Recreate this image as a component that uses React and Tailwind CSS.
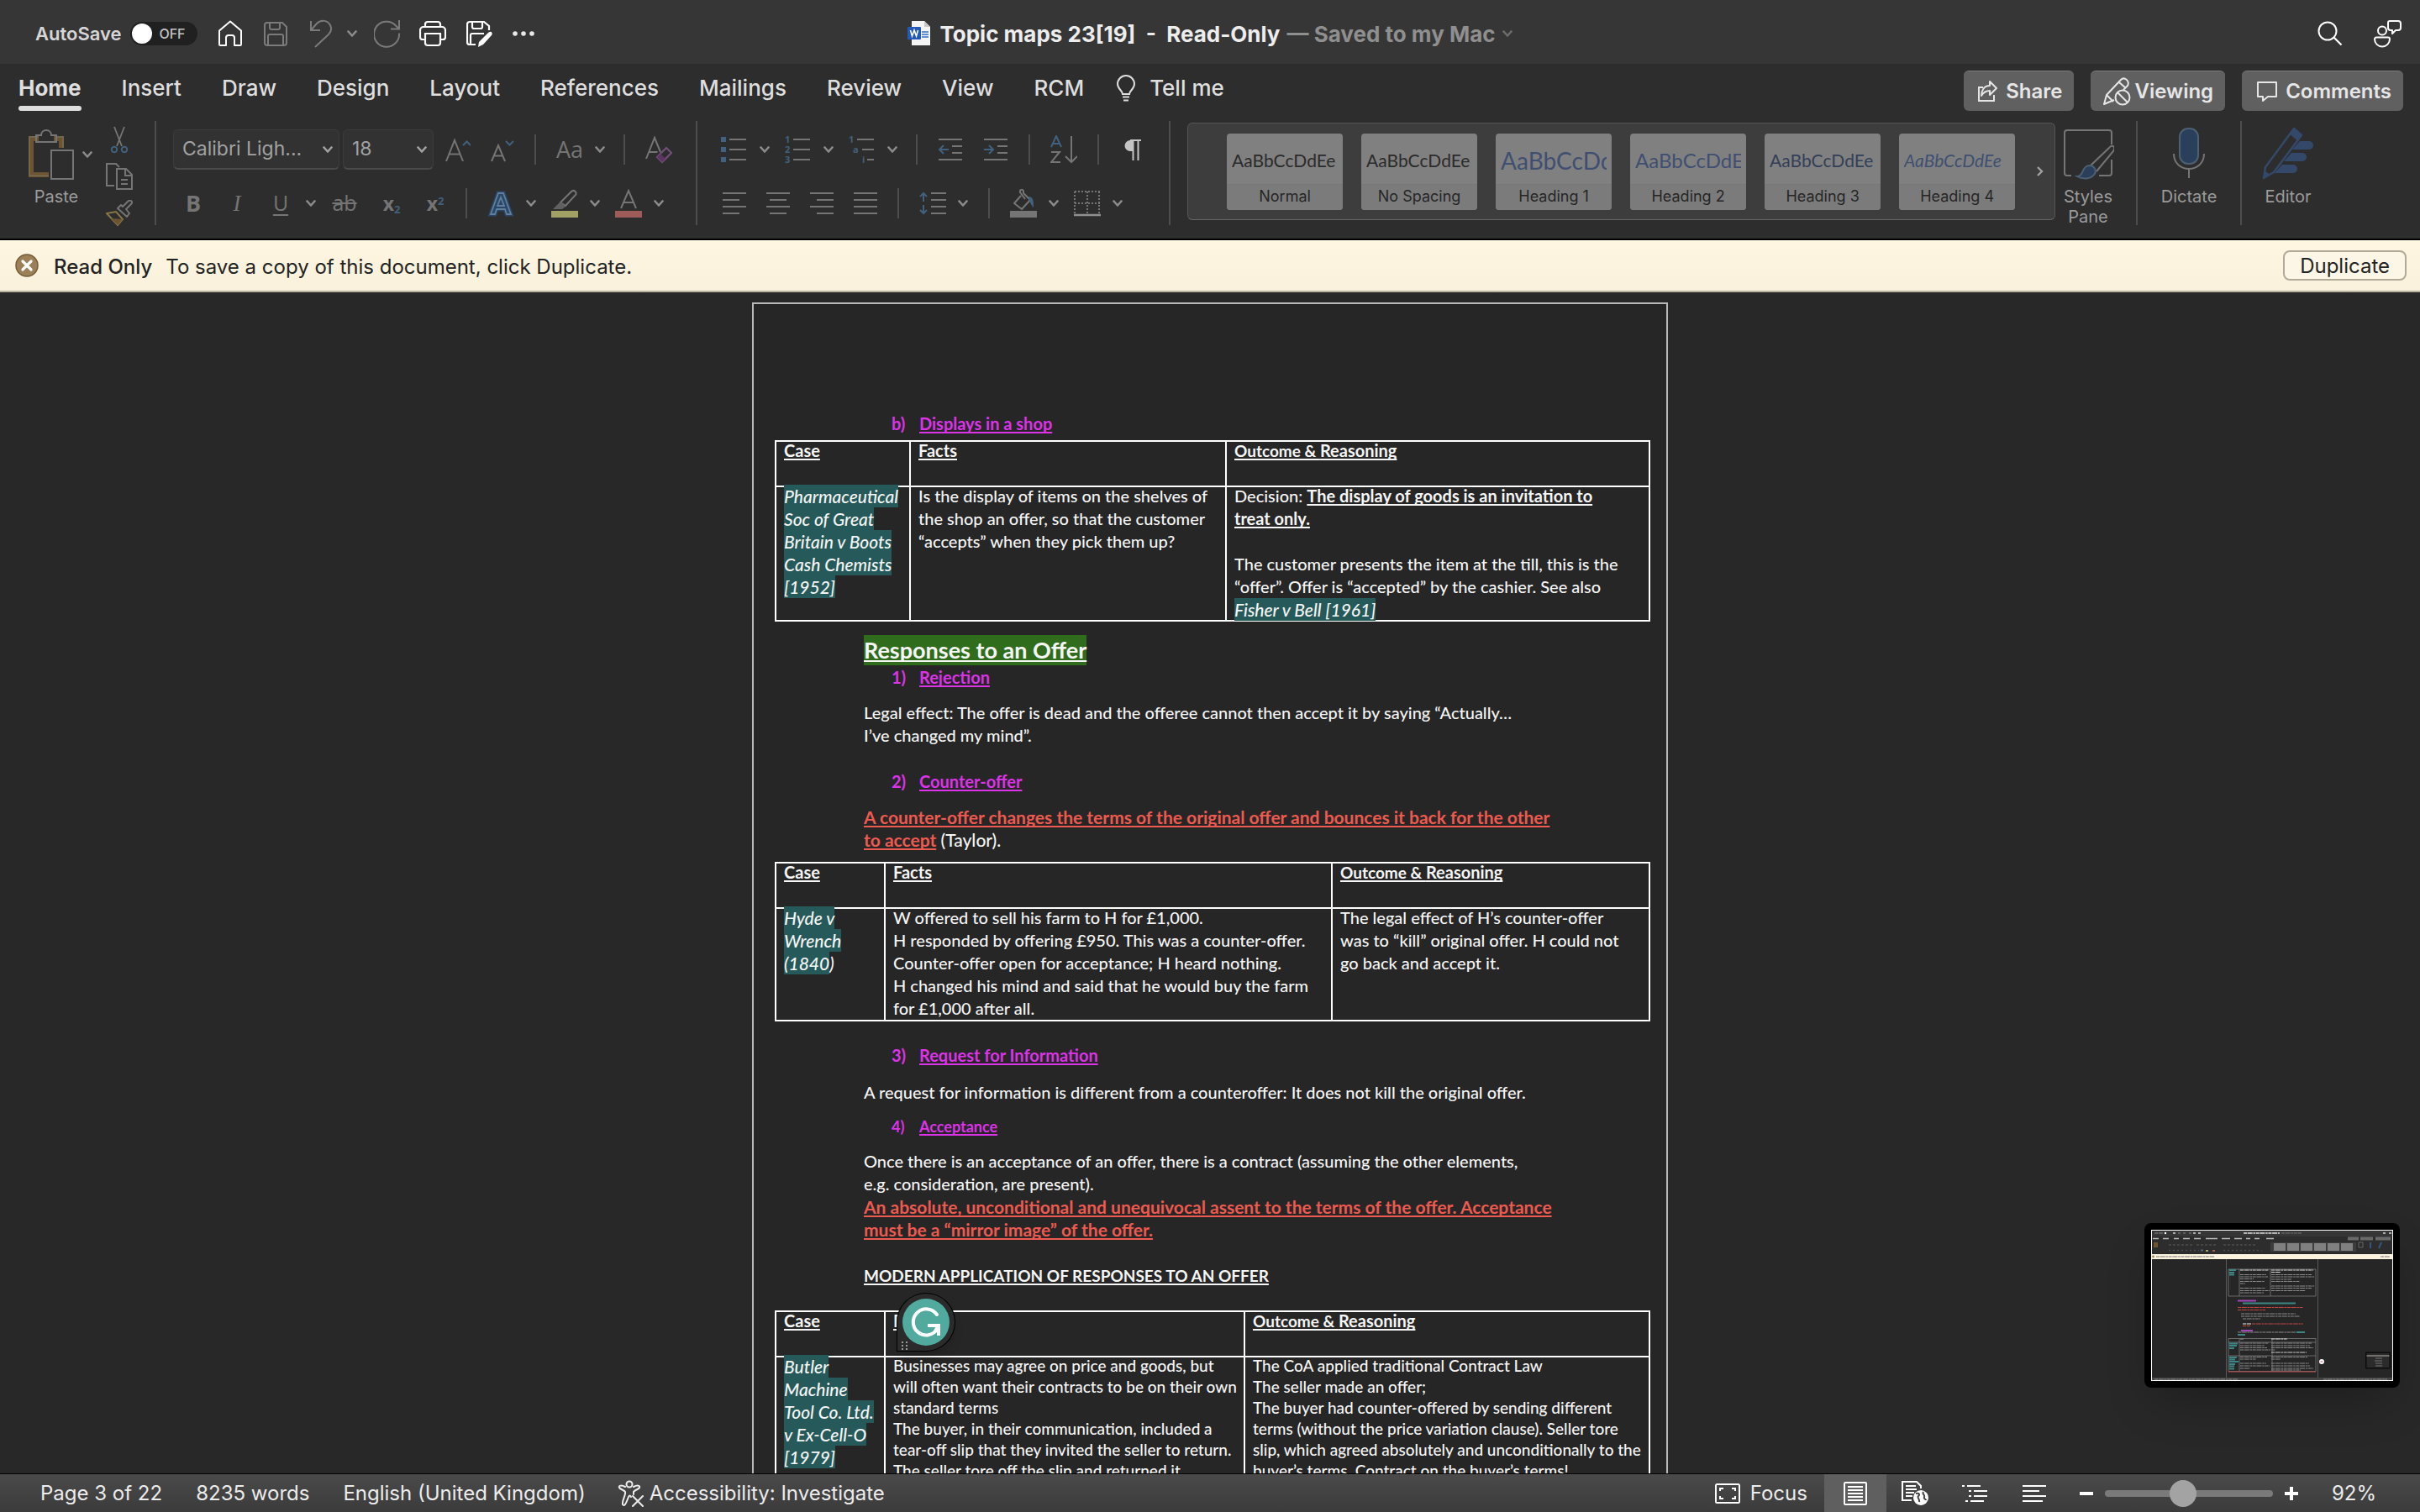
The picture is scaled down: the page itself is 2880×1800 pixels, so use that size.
import React from "react";

const G = "#757575";
const B = "#41617e";

function Svg({ w, h, children, ...rest }) {
  return (
    <svg width={w} height={h} viewBox={`0 0 ${w} ${h}`} fill="none" className="block shrink-0" aria-hidden="true" {...rest}>
      {children}
    </svg>
  );
}

function Chevron({ color = "#8c8c8c" }) {
  return (
    <Svg w={12} h={10}>
      <path d="M1.500 2.500 6 7.500 10.500 2.500" stroke={color} strokeWidth="2.600" strokeLinecap="round" strokeLinejoin="round" />
    </Svg>
  );
}

function IconButton({ label, className = "", children }) {
  return (
    <button type="button" aria-label={label} className={`flex shrink-0 items-center justify-center ${className}`}>
      {children}
    </button>
  );
}

function Menu({ label, className = "" }) {
  return (
    <IconButton label={label} className={className}>
      <Chevron />
    </IconButton>
  );
}

function Sep({ className = "" }) {
  return <div className={`h-9 w-0.5 shrink-0 bg-[#4d4d4d] ${className}`} />;
}

function GroupSep({ className = "" }) {
  return <div className={`h-[124px] w-0.5 shrink-0 bg-[#4d4d4d] ${className}`} />;
}

/* ---------- title bar ---------- */

function TitleBar() {
  return (
    <header className="grid h-[76px] shrink-0 grid-cols-[1fr_auto_1fr] items-center bg-[#363636] pt-1">
      <div className="flex items-center pl-[42px]">
        <label htmlFor="autosave" className="text-[22px] font-semibold text-[#d6d6d6]">AutoSave</label>
        <span className="relative ml-2.5 flex h-7 w-20 items-center justify-between rounded-full bg-[#202020] pl-0.5 pr-3.5">
          <input id="autosave" type="checkbox" role="switch" className="absolute inset-0 h-full w-full cursor-pointer opacity-0" />
          <span className="h-6 w-6 rounded-full bg-white" />
          <span className="text-[16px] font-medium text-[#c4c4c4]">OFF</span>
        </span>
        <IconButton label="Home" className="ml-6">
          <Svg w={30} h={32}>
            <path d="M2 12.500 15 1.500 28 12.500V29a1 1 0 0 1-1 1H20V21a3 3 0 0 0-3-3h-4a3 3 0 0 0-3 3v9H3a1 1 0 0 1-1-1Z" stroke="#fff" strokeWidth="2" strokeLinejoin="round" />
          </Svg>
        </IconButton>
        <IconButton label="Save" className="ml-6">
          <Svg w={30} h={32}>
            <g stroke="#7b7b7b" strokeWidth="2">
              <path d="M5 3h18l5 5v19a3 3 0 0 1-3 3H5a3 3 0 0 1-3-3V6a3 3 0 0 1 3-3Z" />
              <path d="M8 3v6a2 2 0 0 0 2 2h8a2 2 0 0 0 2-2V3M6 30V19a2 2 0 0 1 2-2h14a2 2 0 0 1 2 2v11" />
            </g>
          </Svg>
        </IconButton>
        <IconButton label="Undo" className="ml-6">
          <Svg w={30} h={34}>
            <path d="M3 2v11h11M3 13 10 5c5-5 13-4 16 2 2 4 1 8-2 11L8 33" stroke="#7b7b7b" strokeWidth="2" />
          </Svg>
        </IconButton>
        <Menu label="Undo history" className="ml-4" />
        <IconButton label="Redo" className="ml-5">
          <Svg w={32} h={34}>
            <path d="M30 16.500A15 15 0 1 1 26 7.500L29 10.500M30 1v10.500H20" stroke="#7b7b7b" strokeWidth="2" />
          </Svg>
        </IconButton>
        <IconButton label="Print" className="ml-[22px]">
          <Svg w={32} h={32}>
            <g stroke="#fff" strokeWidth="2.200">
              <path d="M7 8V5a3 3 0 0 1 3-3h12a3 3 0 0 1 3 3v3M7 23H4a3 3 0 0 1-3-3v-8a4 4 0 0 1 4-4h22a4 4 0 0 1 4 4v8a3 3 0 0 1-3 3h-3" />
              <path d="M7 16h18v11a3 3 0 0 1-3 3H10a3 3 0 0 1-3-3Z" />
            </g>
          </Svg>
        </IconButton>
        <IconButton label="Save as" className="ml-6">
          <Svg w={32} h={34}>
            <path d="M11 30H4a3 3 0 0 1-3-3V6a3 3 0 0 1 3-3h17l6 5v5M7 3v6a2 2 0 0 0 2 2h8a2 2 0 0 0 2-2V3M5 30V19a2 2 0 0 1 2-2h14" stroke="#fff" strokeWidth="2.200" />
            <path d="M26 16c3-3 6 0 4 3L20 30l-6 3 1-6Z" fill="#fff" />
          </Svg>
        </IconButton>
        <IconButton label="More commands" className="ml-[22px]">
          <Svg w={28} h={8}>
            <circle cx="4" cy="4" r="2.800" fill="#e8e8e8" />
            <circle cx="14" cy="4" r="2.800" fill="#e8e8e8" />
            <circle cx="24" cy="4" r="2.800" fill="#e8e8e8" />
          </Svg>
        </IconButton>
      </div>
      <h1 className="flex items-center whitespace-nowrap text-[26px] font-bold text-[#ededed]">
        <Svg w={28} h={32}>
          <path d="M5 1h15l7 7v22H5Z" fill="#f4f4f4" />
          <path d="M20 1v7h7Z" fill="#c9c9c9" />
          <path d="M17 14h8M17 17h8M17 20h8" stroke="#2b6fd0" strokeWidth="1.500" />
          <rect x="0" y="8" width="16" height="15" rx="1" fill="#2459b8" />
          <path d="m3.500 12 2 7 2.500-7 2.500 7 2-7" stroke="#fff" strokeWidth="1.600" />
        </Svg>
        <span className="ml-2.5 whitespace-pre">Topic maps 23[19]  -  Read-Only</span>
        <span className="ml-2 text-[#8f8f8f]">— Saved to my Mac</span>
        <span className="ml-2"><Chevron color="#6c6c6c" /></span>
      </h1>
      <div className="flex items-center justify-end gap-9 pr-[22px]">
        <IconButton label="Search">
          <Svg w={30} h={30}>
            <circle cx="12" cy="12" r="10.500" stroke="#fff" strokeWidth="2" />
            <path d="m19.500 19.500 9 9" stroke="#fff" strokeWidth="2.200" />
          </Svg>
        </IconButton>
        <IconButton label="Collaborate">
          <Svg w={34} h={34}>
            <g stroke="#fff" strokeWidth="2">
              <circle cx="11" cy="13.500" r="5" />
              <path d="M4 21.500h14a2 2 0 0 1 2 2c0 5-4 9-9 9s-9-4-9-9a2 2 0 0 1 2-2Z" />
              <path d="M20 2h10a3 3 0 0 1 3 3v5a3 3 0 0 1-3 3h-3l-4 4v-4h-2a3 3 0 0 1-3-3V4a2 2 0 0 1 2-2Z" strokeLinejoin="round" />
            </g>
          </Svg>
        </IconButton>
      </div>
    </header>
  );
}

/* ---------- ribbon tabs ---------- */

const TABS = ["Insert", "Draw", "Design", "Layout", "References", "Mailings", "Review", "View", "RCM"];

function ActionButton({ children }) {
  return (
    <button type="button" className="flex h-12 items-center rounded-md border-t border-[#7c7c7c] bg-[#606060] px-3.5 text-[24px] font-semibold text-[#e6e6e6]">
      {children}
    </button>
  );
}

function TabBar() {
  return (
    <div className="flex h-[68px] items-start pl-[22px] pr-5 pt-2">
      <nav className="flex items-start gap-12 text-[26px] font-medium leading-[42px] text-[#dedede]">
        <button type="button" className="font-bold">
          Home
          <span className="block h-1.5 rounded-full bg-[#dedede]" />
        </button>
        {TABS.map((t) => (
          <button type="button" key={t}>{t}</button>
        ))}
      </nav>
      <button type="button" className="ml-[38px] flex items-center gap-4 text-[26px] font-medium leading-[42px] text-[#dedede]">
        <Svg w={24} h={32}>
          <path d="M8 23c0-4-6-6-6-12a10 10 0 0 1 20 0c0 6-6 8-6 12Z" stroke="#dedede" strokeWidth="2" />
          <path d="M8 26.500h8M9 30.500h6" stroke="#dedede" strokeWidth="2" />
        </Svg>
        Tell me
      </button>
      <div className="ml-auto flex gap-5">
        <ActionButton>
          <Svg w={28} h={28}>
            <path d="M9 9H4v16h18v-7" stroke="#e6e6e6" strokeWidth="2" />
            <path d="M17 2v5C10 7 7 13 7 19c3-5 6-6 10-6v5l8-8Z" stroke="#e6e6e6" strokeWidth="2" strokeLinejoin="round" />
          </Svg>
          <span className="ml-2">Share</span>
        </ActionButton>
        <ActionButton>
          <Svg w={34} h={34}>
            <g stroke="#e6e6e6" strokeWidth="2" strokeLinejoin="round">
              <path d="M14 27 2 32l3-11L22 3c4-4 11 1 8 7l-5 5M5 21l8 8M20 6l8 7" />
              <circle cx="24" cy="24" r="8.500" />
              <path d="m18 18 12 12" />
            </g>
          </Svg>
          <span className="ml-1">Viewing</span>
        </ActionButton>
        <ActionButton>
          <Svg w={32} h={28}>
            <path d="M5 3h22v17H17l-6 5v-5H5Z" stroke="#e6e6e6" strokeWidth="2" strokeLinejoin="round" />
          </Svg>
          <span className="ml-1.5">Comments</span>
        </ActionButton>
      </div>
    </div>
  );
}

/* ---------- ribbon groups ---------- */

function Clipboard() {
  return (
    <div className="flex gap-4 pl-[34px]">
      <div className="flex w-[76px] flex-col pt-2.5">
        <div className="flex items-center justify-between">
          <IconButton label="Paste clipboard">
            <Svg w={54} h={60}>
              <path d="M12 11H3v43h21M30 11h9v11" stroke="#6d5431" strokeWidth="6" />
              <path d="M12 9H1v46h23M32 9h9v13" stroke="#74664a" strokeWidth="2" />
              <path d="M9 15V7h6c0-8 12-8 12 0h6v8Z" stroke="#757575" strokeWidth="2" />
              <path d="M27 25h26v34H27Z" stroke="#757575" strokeWidth="2" />
            </Svg>
          </IconButton>
          <Menu label="Paste options" />
        </div>
        <span className="w-[66px] pt-2 text-center text-[20px] leading-6 text-[#9b9b9b]">Paste</span>
      </div>
      <div className="flex flex-col gap-3 pt-1.5">
        <IconButton label="Cut">
          <Svg w={32} h={32}>
            <path d="M10 1l9 23M22 1l-9 23" stroke={G} strokeWidth="1.800" />
            <circle cx="10" cy="28" r="3.200" stroke={B} strokeWidth="2" />
            <circle cx="22" cy="28" r="3.200" stroke={B} strokeWidth="2" />
          </Svg>
        </IconButton>
        <IconButton label="Copy">
          <Svg w={32} h={32}>
            <path d="M10 27H1V1h11l4 4M13 7h11l7 7v17H13ZM23 7v8h8M18 20h8M18 25h8" stroke={G} strokeWidth="2" />
          </Svg>
        </IconButton>
        <IconButton label="Format painter">
          <Svg w={32} h={32}>
            <path d="m1 16 13 14 6-7-8-9Z" stroke="#8a7748" strokeWidth="2" />
            <path d="M6 22l14 1-6 7Z" fill="#6d5431" />
            <path d="m14 10 11 10 3-4-4-5 6-6c3-3-1-6-4-3l-6 6-2-2Z" stroke={G} strokeWidth="2" strokeLinejoin="round" />
          </Svg>
        </IconButton>
      </div>
    </div>
  );
}

function Picker({ label, value, className }) {
  return (
    <span className={`relative flex h-12 items-center ${className}`}>
      <select aria-label={label} defaultValue={value} className="h-full w-full appearance-none rounded-md border border-b-2 border-[#3c3c3c] border-b-[#4a4a4a] bg-[#323232] pl-2.5 text-[23px] text-[#a2a2a2]">
        <option>{value}</option>
      </select>
      <span className="pointer-events-none absolute right-2"><Chevron color="#a2a2a2" /></span>
    </span>
  );
}

function FontGroup() {
  return (
    <div className="flex flex-col gap-[22px] pt-2.5">
      <div className="flex items-center">
        <Picker label="Font" value="Calibri Ligh..." className="w-[198px]" />
        <Picker label="Font size" value="18" className="ml-1 w-[108px]" />
        <IconButton label="Increase font size" className="ml-3.5">
          <Svg w={30} h={32}>
            <path d="m1 30 10-25 10 25M4.500 21.500h13" stroke={G} strokeWidth="2" />
            <path d="m21 11 4.500-4.500L30 11" stroke={B} strokeWidth="2" />
          </Svg>
        </IconButton>
        <IconButton label="Decrease font size" className="ml-6">
          <Svg w={28} h={32}>
            <path d="m1 30 8-19 8 19M4 23.500h10.500" stroke={G} strokeWidth="2" />
            <path d="m18 6 4.500 4.500L27 6" stroke={B} strokeWidth="2" />
          </Svg>
        </IconButton>
        <Sep className="ml-6" />
        <IconButton label="Change case" className="ml-6 text-[27px] text-[#757575]"><span className="font-['Open_Sans']">Aa</span></IconButton>
        <Menu label="Change case options" className="ml-3.5" />
        <Sep className="ml-[22px]" />
        <IconButton label="Clear formatting" className="ml-6">
          <Svg w={32} h={34}>
            <path d="m1 28 10-25 7 17M4.500 20h10" stroke={G} strokeWidth="2" />
            <path d="m14 26 11-11 6 6-11 11Z" stroke="#75507c" strokeWidth="2" />
            <path d="m14 26 4-4 6 6-4 4Z" fill="#5d3565" />
          </Svg>
        </IconButton>
      </div>
      <div className="flex h-9 items-center pl-2 text-[#757575]">
        <IconButton label="Bold" className="w-8 text-[27px] font-bold"><span className="font-['Open_Sans']">B</span></IconButton>
        <IconButton label="Italic" className="ml-5 w-8 text-[27px] italic"><span className="font-['Liberation_Serif']">I</span></IconButton>
        <IconButton label="Underline" className="ml-5 w-8 text-[25px] underline underline-offset-4"><span className="font-['Open_Sans']">U</span></IconButton>
        <Menu label="Underline style" className="ml-3.5" />
        <IconButton label="Strikethrough" className="ml-[18px] w-8 text-[25px]">
          <span className="font-['Open_Sans'] line-through decoration-2">ab</span>
        </IconButton>
        <IconButton label="Subscript" className="ml-6 w-8">
          <span className="font-['Open_Sans'] text-[23px] font-bold">x<sub className="text-[13px] text-[#41617e]">2</sub></span>
        </IconButton>
        <IconButton label="Superscript" className="ml-5 w-8">
          <span className="font-['Open_Sans'] text-[23px] font-bold">x<sup className="text-[13px] text-[#41617e]">2</sup></span>
        </IconButton>
        <Sep className="ml-5" />
        <IconButton label="Text effects" className="ml-6">
          <Svg w={32} h={32}>
            <path d="M4 29 13 4h6l9 25h-5l-2-6H11l-2 6ZM16 9l-4 10h8Z" stroke="#2a4668" strokeWidth="5" />
            <path d="M4 29 13 4h6l9 25h-5l-2-6H11l-2 6ZM16 9l-4 10h8Z" stroke="#5f7f9d" strokeWidth="1.800" />
          </Svg>
        </IconButton>
        <Menu label="Text effect options" className="ml-3.5" />
        <IconButton label="Highlight colour" className="ml-[18px]">
          <Svg w={32} h={34}>
            <path d="m11 16 13-13c3-3 7 1 5 4L17 20Z" stroke={G} strokeWidth="2" />
            <path d="m2 24 9-9 6 6-4 3Z" fill="#606060" />
            <path d="M0 26h32v8H0Z" fill="#a1a165" />
          </Svg>
        </IconButton>
        <Menu label="Highlight options" className="ml-3.5" />
        <IconButton label="Font colour" className="ml-[18px]">
          <Svg w={32} h={34}>
            <path d="m7 23 9-21 9 21M10.500 16h11" stroke={G} strokeWidth="2" />
            <path d="M0 26h32v8H0Z" fill="#9d5c58" />
          </Svg>
        </IconButton>
        <Menu label="Font colour options" className="ml-3.5" />
      </div>
    </div>
  );
}

function AlignIcon({ rows }) {
  return (
    <Svg w={28} h={28}>
      {rows.map(([x, w], i) => (
        <rect key={i} x={x} y={1 + i * 8} width={w} height="2" fill={G} />
      ))}
    </Svg>
  );
}

function ParagraphGroup() {
  return (
    <div className="flex flex-col gap-[22px] pt-2.5">
      <div className="flex h-12 items-center">
        <IconButton label="Bullets">
          <Svg w={30} h={32}>
            <path d="M0 1h6v6H0ZM0 13h6v6H0ZM0 25h6v6H0Z" fill={B} />
            <path d="M10 4h20M10 16h20M10 28h20" stroke={G} strokeWidth="2" />
          </Svg>
        </IconButton>
        <Menu label="Bullet options" className="ml-4" />
        <IconButton label="Numbering" className="ml-[18px]">
          <Svg w={30} h={40}>
            <g fill={B} fontFamily="Open Sans" fontWeight="700" fontSize="11">
              <text x="0" y="12">1</text>
              <text x="0" y="24">2</text>
              <text x="0" y="36">3</text>
            </g>
            <path d="M10 8h20M10 20h20M10 32h20" stroke={G} strokeWidth="2" />
          </Svg>
        </IconButton>
        <Menu label="Numbering options" className="ml-4" />
        <IconButton label="Multilevel list" className="ml-[18px]">
          <Svg w={30} h={40}>
            <g fill={B} fontFamily="Open Sans" fontWeight="700" fontSize="11">
              <text x="0" y="12">1</text>
              <text x="5" y="24">a</text>
              <text x="16" y="36">i</text>
            </g>
            <path d="M10 8h20M16 20h14M22 32h8" stroke={G} strokeWidth="2" />
          </Svg>
        </IconButton>
        <Menu label="Multilevel options" className="ml-4" />
        <Sep className="ml-[22px]" />
        <IconButton label="Decrease indent" className="ml-6">
          <Svg w={30} h={28}>
            <path d="M1 2h28M17 10h12M17 18h12M1 26h28" stroke={G} strokeWidth="2" />
            <path d="M13 14H2M7 9l-5 5 5 5" stroke={B} strokeWidth="2" />
          </Svg>
        </IconButton>
        <IconButton label="Increase indent" className="ml-6">
          <Svg w={30} h={28}>
            <path d="M1 2h28M17 10h12M17 18h12M1 26h28" stroke={G} strokeWidth="2" />
            <path d="M1 14h11M7 9l5 5-5 5" stroke={B} strokeWidth="2" />
          </Svg>
        </IconButton>
        <Sep className="ml-6" />
        <IconButton label="Sort" className="ml-6">
          <Svg w={32} h={34}>
            <path d="m1 14 6-13 6 13M3.500 10h7" stroke={B} strokeWidth="2" />
            <path d="M1 20h10L1 32h11M25 1v30M18 25l7 7 7-7" stroke={G} strokeWidth="2" />
          </Svg>
        </IconButton>
        <Sep className="ml-6" />
        <IconButton label="Show formatting marks" className="ml-7">
          <Svg w={22} h={26}>
            <path d="M21 2H9a6.500 6.500 0 0 0 0 13h3V2" fill="#c4c4c4" />
            <path d="M22 2H9M12.500 2v24M18.500 2v24" stroke="#c4c4c4" strokeWidth="2" />
          </Svg>
        </IconButton>
      </div>
      <div className="flex h-9 items-center pl-0.5">
        <IconButton label="Align left"><AlignIcon rows={[[0, 28], [0, 20], [0, 28], [0, 20]]} /></IconButton>
        <IconButton label="Align centre" className="ml-6"><AlignIcon rows={[[0, 28], [4, 20], [0, 28], [4, 20]]} /></IconButton>
        <IconButton label="Align right" className="ml-6"><AlignIcon rows={[[0, 28], [8, 20], [0, 28], [8, 20]]} /></IconButton>
        <IconButton label="Justify" className="ml-6"><AlignIcon rows={[[0, 28], [0, 28], [0, 28], [0, 28]]} /></IconButton>
        <Sep className="ml-6" />
        <IconButton label="Line spacing" className="ml-6">
          <Svg w={32} h={30}>
            <path d="M14 3h18M14 11h18M14 19h18M14 27h18" stroke={G} strokeWidth="2" />
            <path d="M5 3v10M1 7l4-4 4 4M5 17v10M1 23l4 4 4-4" stroke={B} strokeWidth="2" />
          </Svg>
        </IconButton>
        <Menu label="Line spacing options" className="ml-3.5" />
        <Sep className="ml-6" />
        <IconButton label="Shading" className="ml-6">
          <Svg w={32} h={34}>
            <path d="M13 8 5 17l9 7 10-11-8-8v-2c0-3-5-3-4 1l6 8" stroke={G} strokeWidth="2" strokeLinejoin="round" />
            <path d="M22 9c6 0 6 6 6 13-2-2-5-6-6-13Z" fill={B} />
            <path d="M0 26h32v8H0Z" fill={G} />
          </Svg>
        </IconButton>
        <Menu label="Shading options" className="ml-3.5" />
        <IconButton label="Borders" className="ml-[18px]">
          <Svg w={32} h={32}>
            <path d="M1 2h30M1 16h30M1 2v26M16 2v26M30 2v26" stroke={G} strokeWidth="2" strokeDasharray="2 2" />
            <path d="M0 30h32" stroke="#909090" strokeWidth="2.500" />
          </Svg>
        </IconButton>
        <Menu label="Border options" className="ml-3.5" />
      </div>
    </div>
  );
}

const STYLES = [
  ["Normal", "text-[21px] text-[#2b2b2b]"],
  ["No Spacing", "text-[21px] text-[#2b2b2b]"],
  ["Heading 1", "text-[28px] text-[#3f4f71]"],
  ["Heading 2", "text-[24px] text-[#3f4f71]"],
  ["Heading 3", "text-[21px] text-[#333f58]"],
  ["Heading 4", "text-[21px] italic text-[#3f4f71]"],
];

function Gallery() {
  return (
    <div className="ml-5 mt-0.5 flex h-[116px] min-w-0 flex-1 items-center rounded-md border border-[#555] border-b-[#666] bg-[#3d3d3d] pl-[46px] pr-3">
      <div className="flex gap-[22px]">
        {STYLES.map(([name, cls]) => (
          <button type="button" key={name} className="flex h-[91px] w-[138px] flex-col overflow-hidden rounded-sm bg-[#808080]">
            <span className="flex h-[61px] w-full items-center border-b border-[#777] px-1.5 pt-1">
              <span className={`w-full overflow-hidden whitespace-nowrap text-left font-['Lato'] ${cls}`}>AaBbCcDdEe</span>
            </span>
            <span className="flex w-full flex-1 items-center justify-center bg-[#7b7b7b] pb-0.5 text-[18px] text-[#262626]">{name}</span>
          </button>
        ))}
      </div>
      <IconButton label="More styles" className="ml-auto">
        <Svg w={10} h={14}>
          <path d="m2 2 5 5-5 5" stroke="#a0a0a0" strokeWidth="2.400" />
        </Svg>
      </IconButton>
    </div>
  );
}

function BigButton({ label, className, children }) {
  return (
    <button type="button" className={`flex shrink-0 flex-col items-center pt-2 text-[20px] leading-6 text-[#9b9b9b] ${className}`}>
      {children}
      <span className="pt-2">{label}</span>
    </button>
  );
}

function Ribbon() {
  return (
    <div className="flex h-[140px] items-start">
      <Clipboard />
      <GroupSep className="ml-[26px]" />
      <div className="ml-5"><FontGroup /></div>
      <GroupSep className="ml-7" />
      <div className="ml-7"><ParagraphGroup /></div>
      <GroupSep className="ml-[33px]" />
      <Gallery />
      <BigButton label={<>Styles<br />Pane</>} className="w-[78px]">
        <Svg w={62} h={62}>
          <path d="M11 57H6a3 3 0 0 1-3-3V6a3 3 0 0 1 3-3h50a3 3 0 0 1 3 3v14M59 38v16a3 3 0 0 1-3 3H44" stroke={G} strokeWidth="2" />
          <path d="M34 45 56 24c4-5 8-1 5 4L41 52" stroke={G} strokeWidth="2" />
          <path d="M18 58c8 0 5-12 14-13 8 0 10 8 5 12-5 5-14 4-19 1Z" fill="#2a3f5c" stroke="#4c6072" strokeWidth="2" />
        </Svg>
      </BigButton>
      <GroupSep className="ml-[18px]" />
      <BigButton label="Dictate" className="w-[122px]">
        <Svg w={40} h={62}>
          <rect x="9" y="1" width="22" height="42" rx="10" fill="#2a3f5c" stroke="#4c6072" strokeWidth="2" />
          <path d="M2 31c0 24 36 24 36 0M20 49v11" stroke={G} strokeWidth="2" />
        </Svg>
      </BigButton>
      <GroupSep />
      <BigButton label="Editor" className="mr-[102px] w-[110px]">
        <Svg w={62} h={62}>
          <path d="M45 16h11a5 5 0 0 1 0 10H36ZM35 30h13a5 5 0 0 1 0 10H26ZM24 44h13a5 5 0 0 1 0 10H15Z" fill="#34486a" />
          <path d="M38 1 4 47l-2 13 12-7L47 9Z" fill="#2d2d2d" stroke="#34486a" strokeWidth="2.500" strokeLinejoin="round" />
          <path d="m38 1 9 8-5 6-9-8ZM3 52l-1 8 7-4Z" fill="#34486a" stroke="#34486a" strokeWidth="1" />
        </Svg>
      </BigButton>
    </div>
  );
}

/* ---------- read-only banner ---------- */

function Banner() {
  return (
    <div className="flex h-16 shrink-0 items-center border-b-2 border-t-2 border-b-[#b8b3a1] border-t-black bg-gradient-to-b from-[#fef6e0] to-[#f9f1dc] pl-[18px] pr-4 text-[24px] text-[#232323]">
      <IconButton label="Close message">
        <Svg w={28} h={28}>
          <circle cx="14" cy="14" r="13" fill="#9c8058" stroke="#755c39" strokeWidth="1.500" />
          <path d="m9 9 10 10M19 9 9 19" stroke="#fff" strokeWidth="3.200" strokeLinecap="round" />
        </Svg>
      </IconButton>
      <strong className="ml-[18px] pt-1 font-medium">Read Only</strong>
      <span className="ml-4 pt-1">To save a copy of this document, click Duplicate.</span>
      <button type="button" className="ml-auto flex h-9 items-center rounded-lg border-2 border-[#b1aa99] bg-[#fcf6e6] px-[18px] pt-0.5">Duplicate</button>
    </div>
  );
}

/* ---------- document ---------- */

function Heading({ n, children, className = "" }) {
  return (
    <h3 className={`flex pl-[164px] font-bold text-[#dc33e8] ${className}`}>
      <span className="w-[33px]">{n}</span>
      <span className="underline">{children}</span>
    </h3>
  );
}

function Mark({ children }) {
  return <span className="bg-[#265a5a] pb-px pt-px italic">{children}</span>;
}

function Lines({ items }) {
  return items.map((t, i) => (
    <React.Fragment key={i}>
      {i > 0 && <br />}
      {t}
    </React.Fragment>
  ));
}

function CaseTable({ cols, bodyClass = "", rowClass, cells, label }) {
  const heads = [
    "Case",
    "Facts",
    <><span className="text-[19px]">Outcome &amp; </span>Reasoning</>,
  ];
  return (
    <table aria-label={label} className="ml-[25px] w-[1042px] table-fixed border-collapse whitespace-nowrap">
      <colgroup>
        <col className={cols[0]} />
        <col className={cols[1]} />
        <col />
      </colgroup>
      <thead>
        <tr className="h-[54px]">
          {heads.map((h, i) => (
            <th key={i} scope="col" className="border-2 border-white pl-[9px] text-left align-top font-bold">
              <div className="-mt-[3px] underline">{h}</div>
            </th>
          ))}
        </tr>
      </thead>
      <tbody>
        <tr className={rowClass}>
          {cells.map((c, i) => (
            <td key={i} className="border-2 border-white p-0 pl-[9px] align-top">
              <div className={`-mt-[3px] ${i > 0 ? bodyClass : "text-[21px]"}`}>{c}</div>
            </td>
          ))}
        </tr>
      </tbody>
    </table>
  );
}

function Page() {
  return (
    <article className="relative mx-auto mt-3 w-[1090px] border-2 border-[#b9b9b9] bg-[#262626] pt-[129px] font-['Lato'] text-[20px] font-medium leading-[27px] text-[#f5f5f5] [&_*]:decoration-2 [&_*]:underline-offset-2 [text-decoration-skip-ink:none]">
      <Heading n="b)">Displays in a shop</Heading>
      <div className="mt-1.5">
        <CaseTable
          label="Displays in a shop"
          cols={["w-[160px]", "w-[376px]"]}
          rowClass="h-[160px]"
          cells={[
            <Mark><Lines items={["Pharmaceutical", "Soc of Great", "Britain v Boots", "Cash Chemists", "[1952]"]} /></Mark>,
            <Lines items={["Is the display of items on the shelves of", "the shop an offer, so that the customer", "“accepts” when they pick them up?"]} />,
            <div className="-mb-1.5">
              Decision: <strong className="underline">The display of goods is an invitation to<br />treat only.</strong>
              <br /><br />
              The customer presents the item at the till, this is the<br />
              “offer”. Offer is “accepted” by the cashier. See also
              <div className="text-[21px]"><Mark>Fisher v Bell [1961]</Mark></div>
            </div>,
          ]}
        />
      </div>

      <h2 className="mt-4 pl-[131px] text-[27px] font-bold leading-9">
        <span className="bg-[#2f6d1c] pb-0.5 pt-px underline">Responses to an Offer</span>
      </h2>
      <Heading n="1)" className="mt-px">Rejection</Heading>
      <p className="mt-[15px] whitespace-nowrap pl-[131px]">
        Legal effect: The offer is dead and the offeree cannot then accept it by saying “Actually…<br />I’ve changed my mind”.
      </p>
      <Heading n="2)" className="mt-7">Counter-offer</Heading>
      <p className="mt-[15px] whitespace-nowrap pl-[131px] text-[21px]">
        <strong className="text-[#ee5a50] underline">A counter-offer changes the terms of the original offer and bounces it back for the other<br />to accept</strong> (Taylor).
      </p>
      <div className="mt-[13px]">
        <CaseTable
          label="Counter-offer"
          cols={["w-[130px]", "w-[532px]"]}
          rowClass="h-[134px]"
          cells={[
            <><Mark>Hyde v<br />Wrench<br />(1840</Mark><i>)</i></>,
            <div className="-mb-1">
              <Lines items={["W offered to sell his farm to H for £1,000.", "H responded by offering £950. This was a counter-offer.", "Counter-offer open for acceptance; H heard nothing.", "H changed his mind and said that he would buy the farm", "for £1,000 after all."]} />
            </div>,
            <Lines items={["The legal effect of H’s counter-offer", "was to “kill” original offer. H could not", "go back and accept it."]} />,
          ]}
        />
      </div>
      <Heading n="3)" className="mt-[27px]">Request for Information</Heading>
      <p className="mt-[17px] whitespace-nowrap pl-[131px]">A request for information is different from a counteroffer: It does not kill the original offer.</p>
      <Heading n="4)" className="mt-3.5 text-[18px]">Acceptance</Heading>
      <p className="mt-3.5 whitespace-nowrap pl-[131px]">
        Once there is an acceptance of an offer, there is a contract (assuming the other elements,<br />
        e.g. consideration, are present).
      </p>
      <p className="whitespace-nowrap pl-[131px] text-[21px]">
        <strong className="text-[#ee5a50] underline">An absolute, unconditional and unequivocal assent to the terms of the offer. Acceptance<br />must be a “mirror image” of the offer.</strong>
      </p>
      <h3 className="mt-7 whitespace-nowrap pl-[131px] text-[19px] font-bold underline">MODERN APPLICATION OF RESPONSES TO AN OFFER</h3>
      <div className="relative mt-7">
        <CaseTable
          label="Modern application"
          cols={["w-[130px]", "w-[428px]"]}
          bodyClass="text-[19px] leading-[25px]"
          rowClass="h-[190px]"
          cells={[
            <Mark><Lines items={["Butler", "Machine", "Tool Co. Ltd.", "v Ex-Cell-O", "[1979]"]} /></Mark>,
            <Lines items={["Businesses may agree on price and goods, but", "will often want their contracts to be on their own", "standard terms", "The buyer, in their communication, included a", "tear-off slip that they invited the seller to return.", "The seller tore off the slip and returned it."]} />,
            <Lines items={["The CoA applied traditional Contract Law", "The seller made an offer;", "The buyer had counter-offered by sending different", "terms (without the price variation clause). Seller tore", "slip, which agreed absolutely and unconditionally to the", "buyer’s terms. Contract on the buyer’s terms!"]} />,
          ]}
        />
        <button type="button" aria-label="Writing assistant" className="absolute -top-[21px] left-[170px] flex h-[70px] w-[70px] items-center justify-center rounded-full rounded-bl-lg border border-black bg-[#2b2b2b] shadow-lg">
          <Svg w={68} h={68}>
            <circle cx="34" cy="34" r="28" fill="#50ab9e" />
            <path d="M47 25A15.500 15.500 0 1 0 47.500 42" stroke="#fff" strokeWidth="4" strokeLinecap="round" />
            <path d="M36 38h13v12M48.500 38 45 45" stroke="#fff" strokeWidth="4" />
            <path d="M6 57v10M11 57v10" stroke="#9a9a9a" strokeWidth="2" strokeDasharray="2 2" />
          </Svg>
        </button>
      </div>
    </article>
  );
}

/* ---------- floating preview ---------- */

function Words({ x, y, w, c = "#8a8a8a", t = 1.2 }) {
  return <path d={`M${x} ${y}h${w}`} stroke={c} strokeWidth={t} strokeDasharray="4 .7 6 .8 2.500 .7" />;
}

const PREVIEW_LINES = [
  [106, 48, 34, "#ddd"], [106, 53.500, 31], [106, 56, 33], [106, 58.500, 16], [106, 61.500, 29], [106, 64, 6], [106, 69.500, 30], [106, 72.500, 35], [106, 75, 28],
  [143, 48, 50, "#ddd"], [143, 50.500, 11, "#ddd"], [143, 53.500, 48], [143, 56, 51], [143, 59, 24], [143, 61.500, 34], [143, 67, 51], [143, 69.500, 48], [143, 72.500, 41],
  [103, 92.500, 78, "#c2473f"], [103, 95.500, 33, "#c2473f"], [107, 100, 65], [107, 103, 70], [109, 106, 21], [109, 112, 10, "#eee"], [120, 112, 61, "#c2473f"], [109, 114.500, 9, "#c2473f"],
  [103, 122, 69], [106, 130, 4], [143, 130, 19, "#ddd"],
  [106, 135, 34], [106, 138, 29], [106, 140.500, 32], [106, 143, 36], [143, 135, 48], [143, 138, 46], [143, 140.500, 50], [143, 143, 5], [143, 146, 42, "#ccc"],
  [106, 151.500, 32], [106, 154, 19], [106, 159, 31], [106, 162, 35], [106, 165, 12], [143, 151.500, 43], [143, 154, 11], [143, 159, 45], [143, 162, 46], [143, 165, 50], [143, 167, 35],
];

function Preview() {
  return (
    <div className="absolute bottom-[102px] right-6 rounded-lg bg-black p-2 shadow-2xl">
      <Svg w={288} h={180}>
        <rect width="288" height="180" fill="#262626" />
        <rect width="288" height="8" fill="#363636" />
        <rect y="8" width="288" height="20" fill="#2d2d2d" />
        <Words x={4} y={4} w={10} />
        <circle cx="17" cy="4" r="1.200" fill="#fff" />
        <path d="M26 4h3M50 4h3M56 4h3" stroke="#aaa" strokeWidth="2" />
        <path d="M32 4h3M38 4h3M45 4h3" stroke="#5f5f5f" strokeWidth="2" />
        <Words x={110} y={4} w={43} c="#ddd" t={1.500} />
        <Words x={155} y={4} w={24} c="#777" />
        <path d="M276 4h3M283 4h3" stroke="#aaa" strokeWidth="2" />
        <path d="M2 10.500h7M14 10.500h7M27 10.500h6M38 10.500h8M51 10.500h8M65 10.500h14M84 10.500h10M99 10.500h9M113 10.500h5M123 10.500h6M137 10.500h9" stroke="#bbb" strokeWidth="1.400" />
        <path d="M234 10.500h13M249 10.500h15M267 10.500h18" stroke="#6a6a6a" strokeWidth="4" />
        <path d="M3 15h5v6H3Z" fill="#6d5431" />
        <path d="M21 18h30M54 18h24M86 18h38" stroke="#4c4c4c" strokeWidth="1.400" strokeDasharray="3 2" />
        <path d="M21 24.500h36M86 24.500h46" stroke="#4c4c4c" strokeWidth="1.400" strokeDasharray="2 3" />
        <path d="M59 24.500h3" stroke="#48698a" strokeWidth="2" />
        <path d="M65 25h3" stroke="#a1a165" strokeWidth="2" />
        <path d="M73 25h3" stroke="#9d5c58" strokeWidth="2" />
        <rect x="142" y="15" width="102" height="11" fill="#3d3d3d" />
        <path d="M146 20.500h94" stroke="#808080" strokeWidth="9" strokeDasharray="14 2" />
        <path d="M247 15h5v6h-5Z" stroke="#666" />
        <path d="M261 15v7M274 15l-3 7" stroke="#34567e" strokeWidth="2" />
        <rect y="29" width="288" height="6" fill="#fbf3dd" />
        <circle cx="2.500" cy="32" r="1.400" fill="#9c8058" />
        <Words x={6} y={32} w={69} c="#777" />
        <Words x={273} y={32} w={11} c="#777" />
        <path d="M89.500 35v141M198.500 35v141" stroke="#5a5a5a" />
        <path d="M92 47h104v32H92ZM105 47v32M142 47v32M92 129.500h104v39H92ZM92 134h104M92 150h104M105 129.500v39M144 129.500v39" stroke="#7c7c7c" strokeWidth=".8" />
        <path d="M92 169h104" stroke="#b84a4a" />
        <path d="M93 48h8M93 51h6M93 53.500h6M109 87.500h63M173 122h10M103 125h9M93 135.500h10M93 138h9M93 141h6M93 152h9M93 154.500h7M93 157h11M93 160h7M93 162.500h6M93 165.500h6" stroke="#3d8686" strokeWidth="2.200" />
        <path d="M103 84.500h22M107 120h14" stroke="#a346b8" strokeWidth="2" />
        {PREVIEW_LINES.map(([x, y, w, c], i) => <Words key={i} x={x} y={y} w={w} c={c} />)}
        <circle cx="203" cy="157" r="3" fill="#fff" />
        <path d="M201.500 157h3" stroke="#b84a7a" />
        <rect x="255" y="145.500" width="30" height="20" rx="1" fill="#0c0c0c" />
        <rect x="256.500" y="147" width="27" height="17" fill="#2b2b2b" />
        <path d="M256.500 150h27" stroke="#b9b5a8" strokeWidth="1" />
        <path d="M267 153h8M266 156h9M267 159h8M267 162h8" stroke="#777" />
        <rect y="176" width="288" height="4" fill="#444" />
        <Words x={4} y={178} w={100} />
        <Words x={205} y={178} w={76} />
        <rect x=".5" y=".5" width="287" height="179" stroke="#fff" />
      </Svg>
    </div>
  );
}

/* ---------- status bar ---------- */

function StatusBar() {
  return (
    <footer className="flex h-[46px] shrink-0 items-stretch border-t border-black bg-gradient-to-b from-[#4a4a4a] to-[#3b3b3b] pl-12 pr-[52px] text-[24px] text-[#ececec]">
      <button type="button">Page 3 of 22</button>
      <button type="button" className="ml-10">8235 words</button>
      <button type="button" className="ml-10">English (United Kingdom)</button>
      <button type="button" className="ml-[38px] flex items-center gap-1.5">
        <Svg w={32} h={32}>
          <g stroke="#ececec" strokeWidth="2" strokeLinecap="round" strokeLinejoin="round">
            <circle cx="14" cy="5" r="3.500" />
            <path d="M9 8C5 6 1 6 2 9c1 2 6 3 7 5 1 4-4 10-3 15 2 3 4-1 7-9 1-2 2-2 3 0M19 8c4-2 8-2 7 1-1 2-6 3-7 5v3" />
            <path d="m18 19 12 12M30 19 18 31" />
          </g>
        </Svg>
        Accessibility: Investigate
      </button>
      <button type="button" className="ml-auto flex items-center gap-3">
        <Svg w={30} h={24}>
          <rect x="1" y="1" width="28" height="22" rx="1.500" stroke="#fff" strokeWidth="2" />
          <path d="M6 9V6h4M20 6h4v3M24 15v3h-4M10 18H6v-3" stroke="#fff" strokeWidth="2" />
        </Svg>
        Focus
      </button>
      <IconButton label="Print layout" className="ml-5 w-[74px] bg-[#5f5f5f]">
        <Svg w={28} h={28}>
          <rect x="1" y="1" width="26" height="26" rx="1" stroke="#fff" strokeWidth="2" />
          <path d="M5 6h18M5 10h18M5 14h18M5 18h18M5 22h18" stroke="#fff" strokeWidth="2" />
        </Svg>
      </IconButton>
      <IconButton label="Web layout" className="ml-[18px]">
        <Svg w={32} h={30}>
          <path d="M12 23H1V1h17l5 5v3M5 6h12M5 10h13M5 14h10M5 18h8" stroke="#fff" strokeWidth="2" />
          <circle cx="23" cy="20" r="9" fill="#fff" />
          <path d="M17 15c4-1 5 1 3 3s2 3 1 7M26 13c-2 3 2 3 1 6s2 2 2 4" stroke="#444" strokeWidth="2" />
        </Svg>
      </IconButton>
      <IconButton label="Outline" className="ml-10">
        <Svg w={30} h={24}>
          <path d="M0 3h3M6 3h16M8 9h3M14 9h16M8 15h3M14 15h16M4 21h3M10 21h16" stroke="#fff" strokeWidth="2" />
        </Svg>
      </IconButton>
      <IconButton label="Draft" className="ml-[42px]">
        <Svg w={28} h={24}>
          <path d="M0 3h28M0 9h20M0 15h28M0 21h24" stroke="#fff" strokeWidth="2" />
        </Svg>
      </IconButton>
      <IconButton label="Zoom out" className="ml-10">
        <Svg w={16} h={16}><path d="M0 8h16" stroke="#fff" strokeWidth="4" /></Svg>
      </IconButton>
      <input
        type="range" min="0" max="200" defaultValue="92" aria-label="Zoom"
        className="mx-3.5 my-auto h-2 w-[200px] appearance-none rounded-full bg-[#7a7a7a] [&::-webkit-slider-thumb]:h-8 [&::-webkit-slider-thumb]:w-8 [&::-webkit-slider-thumb]:appearance-none [&::-webkit-slider-thumb]:rounded-full [&::-webkit-slider-thumb]:bg-[#a3a3a3]"
      />
      <IconButton label="Zoom in">
        <Svg w={16} h={16}><path d="M0 8h16M8 0v16" stroke="#fff" strokeWidth="4" /></Svg>
      </IconButton>
      <button type="button" className="ml-10">92%</button>
    </footer>
  );
}

export default function App() {
  return (
    <div className="flex h-screen flex-col overflow-hidden bg-[#282828] font-['Inter',sans-serif]">
      <TitleBar />
      <section aria-label="Ribbon" className="shrink-0 bg-[#2d2d2d]">
        <TabBar />
        <Ribbon />
      </section>
      <Banner />
      <main className="relative min-h-0 flex-1 overflow-hidden">
        <Page />
        <Preview />
      </main>
      <StatusBar />
    </div>
  );
}
